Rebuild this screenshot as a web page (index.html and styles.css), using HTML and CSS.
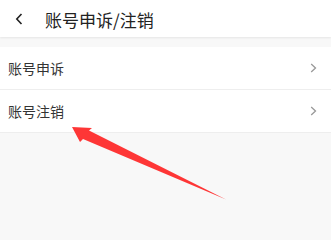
FILE: index.html
```html
<!DOCTYPE html>
<html lang="zh-CN">
<head>
<meta charset="utf-8">
<link rel="stylesheet" href="styles.css">
</head>
<body>
<div class="page">
  <header class="topbar">
    <svg class="back" width="8" height="12" viewBox="0 0 8 12"><path d="M6.5 1 L1.8 6 L6.5 11" fill="none" stroke="#222" stroke-width="1.6"/></svg>
    <span class="title">账号申诉/注销</span>
  </header>
  <div class="gap"></div>
  <ul class="list">
    <li class="row"><span class="label">账号申诉</span><svg class="chev" width="7" height="10" viewBox="0 0 7 10"><path d="M1.2 1 L5.5 5 L1.2 9" fill="none" stroke="#999" stroke-width="1.3"/></svg></li>
    <li class="row"><span class="label">账号注销</span><svg class="chev" width="7" height="10" viewBox="0 0 7 10"><path d="M1.2 1 L5.5 5 L1.2 9" fill="none" stroke="#999" stroke-width="1.3"/></svg></li>
  </ul>
  <svg class="arrow" width="331" height="224" viewBox="0 0 331 224"><polygon points="72,127 92,128 89,130.5 226,199.5 83,139 80,142" fill="#fe3636"/></svg>
</div>
</body>
</html>
```
FILE: styles.css
```css
html, body {
  margin: 0;
  padding: 0;
  background: #f8f8f8;
}
.page {
  position: relative;
  width: 331px;
  height: 224px;
  overflow: hidden;
  font-family: "Noto Sans CJK SC", "Noto Sans", sans-serif;
}
.topbar {
  height: 37px;
  background: #fff;
  display: flex;
  align-items: center;
  padding-left: 15px;
  box-shadow: 0 1px 2px rgba(0,0,0,0.08);
  position: relative;
  z-index: 1;
}
.back {
  display: block;
  margin-top: 1px;
}
.title {
  margin-left: 22px;
  font-size: 17px;
  color: #222;
  line-height: 1;
  margin-top: 1px;
}
.gap {
  height: 10px;
}
.list {
  list-style: none;
  margin: 0;
  padding: 0;
  background: #fff;
}
.row {
  height: 42px;
  display: flex;
  align-items: center;
  justify-content: space-between;
  padding: 0 14px 0 8px;
  border-bottom: 1px solid #eeeeee;
}
.row:first-child {
  height: 42px;
}
.label {
  font-size: 14px;
  color: #333;
}
.chev {
  display: block;
}
.arrow {
  position: absolute;
  left: 0;
  top: 0;
  pointer-events: none;
  z-index: 2;
}
```
